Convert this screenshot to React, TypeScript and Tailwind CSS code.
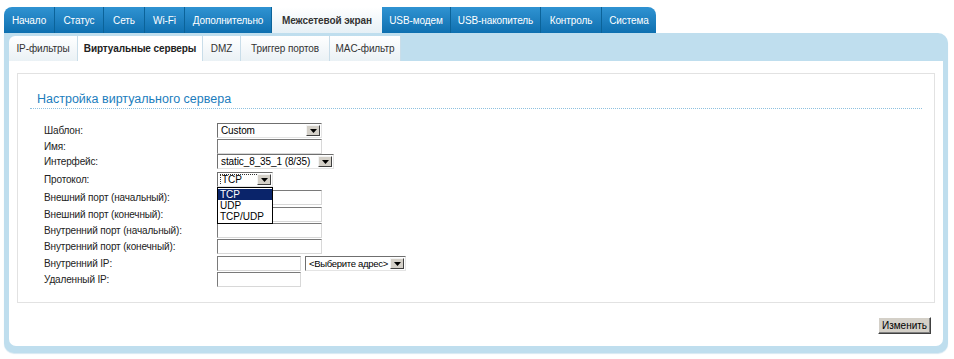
import React from "react";

const font = { fontFamily: '"Liberation Sans", Arial, sans-serif' };

function Arrow() {
  return (
    <div className="flex h-full w-[14px] shrink-0 items-center justify-center border border-t-[#f4f4f4] border-l-[#f4f4f4] border-b-[#404040] border-r-[#404040] bg-[#d4d0c8]">
      <svg width="7" height="4" viewBox="0 0 7 4">
        <path d="M0 0 H7 L3.5 4 Z" fill="#000" />
      </svg>
    </div>
  );
}

function Select({ w, text, focus, tight }: { w: number; text: string; focus?: boolean; tight?: boolean }) {
  return (
    <div
      className="flex h-[15px] items-stretch border border-t-[#6f6f6f] border-l-[#6f6f6f] border-b-[#e4e4e4] border-r-[#e4e4e4] bg-white p-[1px]"
      style={{ width: w }}
    >
      <div className="flex flex-1 items-center overflow-hidden pl-[1px]">
        <span
          className={
            "whitespace-nowrap leading-[10px] text-black " +
            (tight ? "text-[9.5px] tracking-[-0.3px] " : "text-[10px] tracking-[-0.1px] ") +
            (focus ? "border border-dotted border-[#333] px-[1px] pr-[18px]" : "px-[1px]")
          }
        >
          {text}
        </span>
      </div>
      <Arrow />
    </div>
  );
}

function Input({ w }: { w: number }) {
  return (
    <div
      className="h-[15px] border border-t-[#7a7a7a] border-l-[#7a7a7a] border-b-[#d8d8d8] border-r-[#d8d8d8] bg-white"
      style={{ width: w }}
    />
  );
}

const topTabs = [
  { t: "Начало", w: 51 },
  { t: "Статус", w: 49 },
  { t: "Сеть", w: 41 },
  { t: "Wi-Fi", w: 40 },
  { t: "Дополнительно", w: 87 },
  { t: "Межсетевой экран", w: 110, active: true },
  { t: "USB-модем", w: 69 },
  { t: "USB-накопитель", w: 90 },
  { t: "Контроль", w: 61 },
  { t: "Система", w: 54 },
];

const subTabs = [
  { t: "IP-фильтры", w: 69 },
  { t: "Виртуальные серверы", w: 125, active: true },
  { t: "DMZ", w: 38 },
  { t: "Триггер портов", w: 89 },
  { t: "MAC-фильтр", w: 71 },
];

export default function App() {
  const rows: { label: string; h: number; el: React.ReactNode }[] = [
    { label: "Шаблон:", h: 16, el: <Select w={105} text="Custom" /> },
    { label: "Имя:", h: 15, el: <Input w={105} /> },
    { label: "Интерфейс:", h: 18, el: <Select w={117} text="static_8_35_1 (8/35)" /> },
    { label: "Протокол:", h: 18, el: <Select w={56} text="TCP" focus /> },
    { label: "Внешний порт (начальный):", h: 17, el: <Input w={105} /> },
    { label: "Внешний порт (конечный):", h: 16, el: <Input w={105} /> },
    { label: "Внутренний порт (начальный):", h: 16, el: <Input w={105} /> },
    { label: "Внутренний порт (конечный):", h: 17, el: <Input w={105} /> },
    {
      label: "Внутренний IP:",
      h: 16,
      el: (
        <div className="flex gap-[4px]">
          <Input w={84} />
          <Select w={101} text="<Выберите адрес>" tight />
        </div>
      ),
    },
    { label: "Удаленный IP:", h: 16, el: <Input w={84} /> },
  ];

  return (
    <div className="h-[359px] w-[954px] bg-white pl-[4px] pt-[7px]" style={font}>
      <div className="w-[944px]">
        {/* top tabs */}
        <div className="flex h-[26px]">
          {topTabs.map((tab, i) => (
            <div
              key={tab.t}
              className={
                "flex items-center justify-center whitespace-nowrap text-[10px] tracking-[-0.1px] " +
                (tab.active
                  ? "bg-gradient-to-b from-white to-[#e6f0f6] font-bold text-[#333]"
                  : "border-r border-[#0b6399] bg-gradient-to-b from-[#2f93d2] to-[#0e70b0] text-white") +
                (i === 0 ? " rounded-tl-[8px]" : "") +
                (i === topTabs.length - 1 ? " rounded-tr-[8px] border-r-0" : "")
              }
              style={{ width: tab.w }}
            >
              {tab.t}
            </div>
          ))}
        </div>

        {/* panel */}
        <div className="rounded-tr-[10px] rounded-b-[10px] bg-[#bfdeee] px-[5px] pb-[7px] pt-[3px] shadow-[0_1px_1px_#d6e8f2]">
          <div className="flex h-[25px]">
            {subTabs.map((tab, i) => (
              <div
                key={tab.t}
                className={
                  "flex items-center justify-center whitespace-nowrap border-r border-[#c9dde9] text-[10px] tracking-[-0.1px] " +
                  (tab.active
                    ? "bg-white font-bold text-[#222]"
                    : "bg-gradient-to-b from-white to-[#eaf1f5] text-[#333]") +
                  (i === 0 ? " rounded-tl-[6px]" : "")
                }
                style={{ width: tab.w }}
              >
                {tab.t}
              </div>
            ))}
          </div>

          <div className="rounded-b-[7px] bg-white px-[8px] pb-[12px] pt-[12px]">
            <div className="h-[230px] border border-[#e2e2e2] px-[12px] pt-[17px]">
              <div className="border-b border-dotted border-[#8ec1df] pb-[1px] pl-[7px] text-[12.5px] leading-[16px] text-[#1b7dbd]">
                Настройка виртуального сервера
              </div>
              <div className="relative pl-[14px] pt-[14px]">
                {rows.map((r) => (
                  <div key={r.label} className="flex" style={{ height: r.h }}>
                    <div className="w-[173px] shrink-0 pt-[1px] text-[10px] leading-[13px] tracking-[-0.15px] text-[#222]">
                      {r.label}
                    </div>
                    <div>{r.el}</div>
                  </div>
                ))}
                {/* open dropdown list */}
                <div className="absolute left-[187px] top-[78px] w-[56px] border border-black bg-white py-[1px] text-[10px] leading-[11px] text-black">
                  <div className="bg-[#0a246a] px-[2px] text-white">TCP</div>
                  <div className="px-[2px]">UDP</div>
                  <div className="px-[2px]">TCP/UDP</div>
                </div>
              </div>
            </div>
            <div className="flex justify-end pr-[4px] pt-[14px]">
              <div className="flex h-[17px] w-[53px] items-center justify-center border border-t-white border-l-white border-b-[#404040] border-r-[#404040] bg-[#d4d0c8] text-[10px] text-black shadow-[inset_-1px_-1px_0_#808080]">
                Изменить
              </div>
            </div>
          </div>
        </div>
      </div>
    </div>
  );
}
